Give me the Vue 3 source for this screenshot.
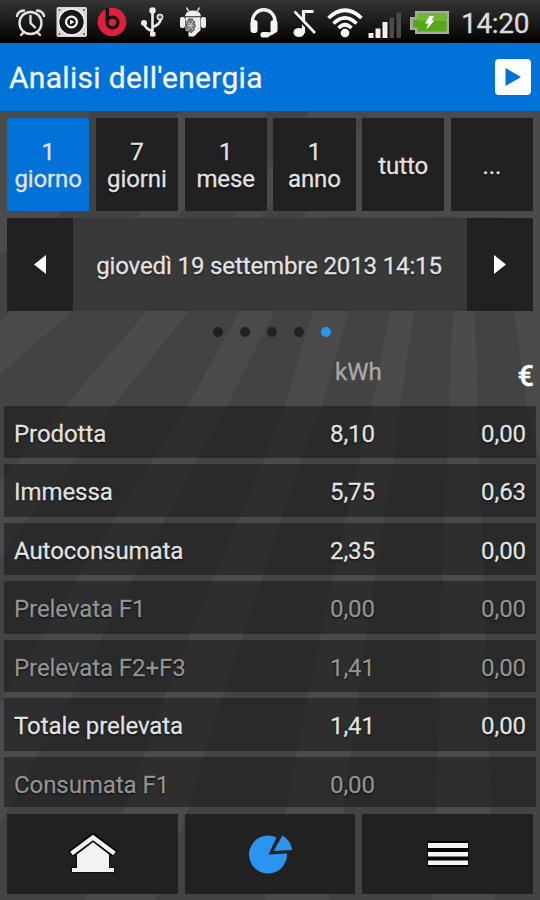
<script setup>
const tabs = ['1\ngiorno', '7\ngiorni', '1\nmese', '1\nanno', 'tutto', '...']
const rows = [
  { label: 'Prodotta', kwh: '8,10', eur: '0,00' },
  { label: 'Immessa', kwh: '5,75', eur: '0,63' },
  { label: 'Autoconsumata', kwh: '2,35', eur: '0,00' },
  { label: 'Prelevata F1', kwh: '0,00', eur: '0,00', dim: true },
  { label: 'Prelevata F2+F3', kwh: '1,41', eur: '0,00', dim: true },
  { label: 'Totale prelevata', kwh: '1,41', eur: '0,00' },
  { label: 'Consumata F1', kwh: '0,00', eur: '', dim: true },
]
</script>

<template>
  <div class="screen">
    <svg class="rays" viewBox="0 0 540 900" aria-hidden="true">
      <g fill="#4b4b4b">
        <path d="M0 110H90L60 214L0 255z" />
        <path d="M180 110H270L180 214L73 311L0 374V322L12 311L140 214z" />
        <path d="M310 110H370L262 214L189 311L114 405L73 462L27 520L0 560V482L66 405L147 311L238 214z" />
        <path d="M370 110H540V217H325L274 311L227 405L196 462L134 577L71 696L38 755L0 825V704L5 696L78 577L114 520L151 462L188 405L240 311L305 214z" />
        <path d="M365 217H400L349 311L322 405L300 462L262 577L222 696L187 812L155 900H85L123 812L165 696L214 577L263 462L285 405L313 311z" />
        <path d="M405 217H432L414 311L400 405L393 462L375 577L358 696L343 812L329 900H265L285 812L308 696L333 577L359 462L372 405L390 311z" />
        <path d="M458 217H472L475 311L479 462L484 577L491 812L495 900H432L436 812L442 577L447 462L453 311z" />
        <path d="M500 217H540V462L527 405L514 311z" />
      </g>
    </svg>

    <div class="status">
      <svg class="status-icons" viewBox="0 0 456 43" aria-hidden="true">
        <!-- alarm -->
        <g fill="none" stroke="#e4e4e4" stroke-width="2.4" stroke-linecap="round">
          <circle cx="30.5" cy="23" r="11" />
          <path d="M30.5 16V23L35 27.5M23.500 32.500L21 35M37.500 32.500L40 35" />
          <path d="M17 16Q18 11 24 10.500M44 16Q43 11 37 10.500" />
        </g>
        <!-- speaker -->
        <rect x="56.500" y="7" width="30.500" height="30" rx="2" fill="#d9d9d9" />
        <circle cx="71.500" cy="22" r="12.800" fill="#171717" stroke="#fff" stroke-width="1.200" />
        <circle cx="71.500" cy="22" r="6.500" fill="#fff" />
        <circle cx="71.500" cy="22" r="4.300" fill="#151515" />
        <path d="M70 19.500L74.500 22L70 24.500z" fill="#fff" />
        <g fill="#555"><circle cx="59.500" cy="10" r="1" /><circle cx="84" cy="10" r="1" /><circle cx="59.500" cy="34" r="1" /><circle cx="84" cy="34" r="1" /></g>
        <!-- beats -->
        <circle cx="112" cy="22" r="14.300" fill="#e01f3d" />
        <path d="M107.300 8V22" stroke="#151515" stroke-width="3.600" />
        <circle cx="112.500" cy="22.500" r="5.400" fill="none" stroke="#151515" stroke-width="3.200" />
        <!-- usb -->
        <g fill="none" stroke="#ededed" stroke-width="2.600">
          <path d="M152.500 11V34M152.500 31Q145 29 144 23M152.500 27Q160 25 161 18" />
        </g>
        <g fill="#ededed">
          <circle cx="152.500" cy="10.500" r="3.200" /><circle cx="144" cy="23" r="3" />
          <rect x="150" y="32" width="5.500" height="4.500" rx="1" />
        </g>
        <circle cx="160" cy="17" r="2.600" fill="#555" stroke="#ededed" stroke-width="1.500" />
        <!-- android -->
        <g fill="#ececec">
          <path d="M185 16.300Q185.500 10.500 193 10.500Q200.500 10.500 201 16.300z" />
          <path d="M188.500 11L186.500 7.500M197.500 11L199.500 7.500" stroke="#ececec" stroke-width="1.500" />
          <rect x="180" y="17" width="5" height="11" rx="2" /><rect x="201" y="17" width="5" height="11" rx="2" />
          <path d="M185.500 17.300H200.500V30Q200.500 31 199 31.500L194 36.500H188.500V31.500Q185.500 31.500 185.500 29z" />
        </g>
        <ellipse cx="190.500" cy="25.500" rx="4.500" ry="7" fill="#777" stroke="#333" stroke-dasharray="2 1.500" />
        <path d="M188 21L193 30M193 21L188 30M187 25.500H194" stroke="#ddd" stroke-width=".8" />
        <!-- headset -->
        <path d="M252.500 27V21A11 11 0 0 1 275 21V27Q275 34 267 34.500" fill="none" stroke="#f4f4f4" stroke-width="3.300" />
        <rect x="250.500" y="20" width="7" height="13" rx="3" fill="#f4f4f4" />
        <rect x="270.500" y="20" width="7" height="13" rx="3" fill="#f4f4f4" />
        <rect x="260.500" y="32" width="9" height="5.500" rx="2.500" fill="#f4f4f4" />
        <!-- muted note -->
        <ellipse cx="299" cy="32.500" rx="5.500" ry="4.500" fill="#f4f4f4" />
        <path d="M303.500 33V11.500H313.500" fill="none" stroke="#f4f4f4" stroke-width="3.200" />
        <path d="M293.500 13.500L313.500 35" stroke="#111" stroke-width="2" />
        <path d="M294.500 11.500L315 33" stroke="#f4f4f4" stroke-width="2.600" />
        <!-- wifi -->
        <circle cx="345" cy="33" r="4.300" fill="#fff" />
        <g fill="none" stroke="#fff" stroke-width="3.600">
          <path d="M328.500 18Q345 2.500 361.500 18" />
          <path d="M333.500 23.500Q345 12 356.500 23.500" />
          <path d="M338.500 28Q345 21.500 351.500 28" />
        </g>
        <!-- signal -->
        <g fill="#f0f0f0"><rect x="368.500" y="33" width="5" height="5" /><rect x="375.500" y="28.500" width="5" height="9.500" /><rect x="382.500" y="22" width="5" height="16" /></g>
        <g fill="#4b4b4b"><rect x="389.500" y="17.500" width="4.500" height="20.500" /><rect x="396.500" y="12.500" width="4.500" height="25.500" /></g>
        <!-- battery -->
        <path d="M415 11H449V34H415V30H410V17H415z" fill="#a7a9a7" />
        <path d="M417.500 13.500H446.500V31.500H417.500V27.500H413V19.500H417.500z" fill="#55a817" />
        <path d="M417.500 14H446.500V21H417.500z" fill="#6dbb2c" />
        <path d="M429.500 16H434L431.500 20.500H434.500L426 30L428.500 23.500H425z" fill="#fff" />
      </svg>
      <span class="clock">14:20</span>
    </div>

    <header class="title-bar">
      <h1>Analisi dell'energia</h1>
      <button class="play" aria-label="Play">
        <svg viewBox="0 0 36 36"><path d="M10.500 9L26 18L10.500 27z" fill="#0072d8" /></svg>
      </button>
    </header>

    <nav class="tabs">
      <button v-for="(t, i) in tabs" :key="t" class="tab" :class="{ active: i === 0 }">{{ t }}</button>
    </nav>

    <div class="date-bar">
      <button class="arrow" aria-label="Indietro"><svg viewBox="0 0 12 20"><path d="M12 0V19L0 9.500z" /></svg></button>
      <span class="date">giovedì 19 settembre 2013 14:15</span>
      <button class="arrow" aria-label="Avanti"><svg viewBox="0 0 12 20"><path d="M0 0V19L12 9.500z" /></svg></button>
    </div>

    <div class="dots"><i v-for="n in 5" :key="n" :class="{ on: n === 5 }"></i></div>

    <div class="columns"><span class="unit">kWh</span><span class="euro">€</span></div>

    <main class="list">
      <div v-for="r in rows" :key="r.label" class="row" :class="{ dim: r.dim }">
        <span>{{ r.label }}</span><span>{{ r.kwh }}</span><span class="eur">{{ r.eur }}</span>
      </div>
    </main>

    <footer class="bottom">
      <button aria-label="Home">
        <svg class="home" width="52" height="44" viewBox="0 0 52 44">
          <path d="M10 19L26 8L42 19V35H47V39H5V35H10z" fill="#f2f2f2" stroke="#080808" stroke-width="1.500" paint-order="stroke" />
          <path d="M4 21L26 4L48 21" fill="none" stroke="#080808" stroke-width="8" />
          <path d="M4.500 20.500L26 4.500L47.500 20.500" fill="none" stroke="#f2f2f2" stroke-width="4.500" />
        </svg>
      </button>
      <button aria-label="Analisi">
        <svg class="pie" width="46" height="42" viewBox="0 0 46 42" fill="#2b94ee">
          <path d="M20.500 21.500L28.500 4.500A19 19 0 1 0 39 20.500z" />
          <path d="M25.500 18L34.500 2.500Q43 7.500 44 17z" />
        </svg>
      </button>
      <button aria-label="Menu">
        <svg width="44" height="28" viewBox="0 0 44 28">
          <path d="M1 1H43V27H1z" fill="#050505" />
          <path d="M2 3H42V8H2zM2 12H42V16.500H2zM2 20.500H42V25H2z" fill="#f4f4f4" />
        </svg>
      </button>
    </footer>
  </div>
</template>

<style>
body { margin: 0; background: #434343; }
</style>

<style scoped>
.screen {
  position: relative;
  width: 540px;
  height: 900px;
  overflow: hidden;
  display: flex;
  flex-direction: column;
  background: #434343;
  font-family: Roboto, "Liberation Sans", sans-serif;
  color: #e2e2e2;
  -webkit-text-stroke: .3px currentColor;
}
.rays { position: absolute; inset: 0; width: 540px; height: 900px; }
.screen > :not(.rays) { position: relative; flex-shrink: 0; box-sizing: border-box; }
button {
  border: 0;
  padding: 0;
  margin: 0;
  font: inherit;
  color: inherit;
  background: #212121;
  display: flex;
  align-items: center;
  justify-content: center;
}
.status {
  height: 43px;
  display: flex;
  align-items: center;
  background: linear-gradient(#343432, #1b1b1a 50%, #020202);
}
.status-icons { width: 456px; height: 43px; }
.clock { margin: 3px 0 0 5px; font-size: 28px; letter-spacing: -.3px; color: #dcdcdc; }
.title-bar {
  height: 68px;
  padding: 0 9px 0 9px;
  display: flex;
  align-items: center;
  justify-content: space-between;
  background: #0072d8;
}
h1 { margin: 1px 0 0; font-size: 30px; letter-spacing: .3px; font-weight: 400; color: #f3f8fd; }
.play { width: 36px; height: 36px; border-radius: 4px; background: #fff; }
.play svg { width: 36px; height: 36px; }
.tabs {
  margin-top: 6.500px;
  padding: 0 7px;
  height: 93px;
  display: grid;
  grid-template-columns: repeat(6, 1fr);
  gap: 6.500px;
}
.tab { padding-top: 4px; white-space: pre-line; font-size: 24px; line-height: 27px; letter-spacing: -.1px; text-align: center; text-shadow: 0 1px 2px #000; }
.tab.active { background: #0072d8; text-shadow: none; }
.date-bar { display: flex; height: 92.500px; margin: 7.500px 7px 0; background: #393939; }
.arrow { width: 66px; padding-top: 2px; }
.arrow svg { width: 12px; height: 20px; fill: #fff; }
.date { flex: 1; display: flex; align-items: center; justify-content: center; padding: 4px 2px 0 0; font-size: 24px; letter-spacing: -.13px; white-space: nowrap; text-shadow: 0 1px 2px #111; }
.dots { display: flex; justify-content: center; gap: 17px; margin-top: 16.500px; padding-left: 4px; }
.dots i { width: 10px; height: 10px; border-radius: 50%; background: #202020; }
.dots .on { background: #2b94ee; }
.columns { height: 68.500px; display: flex; justify-content: space-between; padding: 21px 6px 0 335px; font-size: 24px; line-height: 28px; }
.unit { color: #a9a9a9; }
.euro { font-weight: 500; font-size: 29px; margin-top: 4px; color: #fff; }
.list { height: 401.500px; padding: 0 4px; display: flex; flex-direction: column; gap: 6px; overflow: hidden; }
.row {
  flex: 0 0 52.500px;
  display: grid;
  grid-template-columns: 316px 1fr auto;
  align-items: center;
  padding: 4px 10px 0;
  box-sizing: border-box;
  background: rgba(12, 12, 12, .46);
  font-size: 24px;
  letter-spacing: -.07px;
  text-shadow: 0 1px 2px #000, 0 0 1px #000;
}
.dim { color: #949494; }
.bottom { display: grid; grid-template-columns: repeat(3, 1fr); gap: 7px; height: 79.500px; margin-top: 7px; padding: 0 7px; }
.home { margin: 2px 0 0 2px; }
.pie { margin-left: 2px; }
</style>
